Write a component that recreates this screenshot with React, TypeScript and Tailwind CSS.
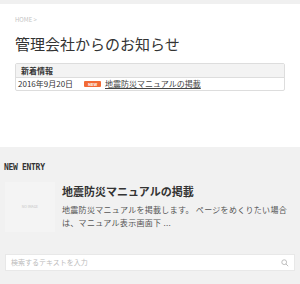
import React from "react";

const jp = { fontFamily: '"Noto Sans CJK JP", "Noto Sans", sans-serif' };

export default function App() {
  return (
    <div className="w-[300px] h-[284px] bg-white flex flex-col overflow-hidden" style={jp}>
      <div className="h-[4px] bg-[#f0f0f0]" />
      <div className="px-[15px] pt-[10px] h-[16px] text-[6px] leading-[12px] text-[#c4c4c4]">HOME &gt;</div>
      <h1 className="px-[15px] mt-[14px] text-[15px] leading-[20px] text-[#333333]">管理会社からのお知らせ</h1>
      <div className="mx-[15px] mt-[9px] w-[270px] border border-[#dddddd] rounded-[2px]">
        <div className="h-[14px] bg-[#f3f3f3] border-b border-[#dddddd] px-[5px] text-[8px] leading-[14px] font-bold text-[#333333]">新着情報</div>
        <div className="h-[12px] flex items-center px-[2px] text-[8px] text-[#333333]">
          <span className="w-[66px]">2016年9月20日</span>
          <span className="w-[17px] h-[6px] bg-[#f26a35] rounded-[1px] text-white text-[4px] leading-[6px] text-center font-bold">NEW</span>
          <span className="ml-[4px] underline text-[#444444]">地震防災マニュアルの掲載</span>
        </div>
      </div>
      <div className="mt-[56px] flex-1 bg-[#f1f1f1] flex flex-col">
        <div className="mt-[16px] px-[4px] text-[8px] leading-[10px] font-bold text-[#333333] tracking-[-0.3px]" style={{ fontFamily: '"DejaVu Sans Mono", monospace' }}>NEW ENTRY</div>
        <div className="mt-[11px] flex px-[5px]">
          <div className="w-[50px] h-[50px] bg-[#f4f4f4] flex items-center justify-center text-[3.5px] text-[#c4c4c4] mt-[-2px]">NO IMAGE</div>
          <div className="ml-[7px] flex flex-col w-[228px]">
            <div className="text-[11px] leading-[14px] font-bold text-[#333333]">地震防災マニュアルの掲載</div>
            <div className="mt-[5px] text-[8px] leading-[13px] text-[#555555] tracking-[0.3px]">地震防災マニュアルを掲載します。 ページをめくりたい場合は、マニュアル表示画面下 ...</div>
          </div>
        </div>
        <div className="mt-[22px] mx-[5px] h-[17px] bg-white border border-[#e8e8e8] flex items-center justify-between px-[5px]">
          <span className="text-[7px] text-[#bbbbbb]">検索するテキストを入力</span>
          <svg width="8" height="8" viewBox="0 0 10 10" fill="none" stroke="#bbbbbb" strokeWidth="1.2">
            <circle cx="4" cy="4" r="3" />
            <line x1="6.2" y1="6.2" x2="9" y2="9" />
          </svg>
        </div>
      </div>
    </div>
  );
}
